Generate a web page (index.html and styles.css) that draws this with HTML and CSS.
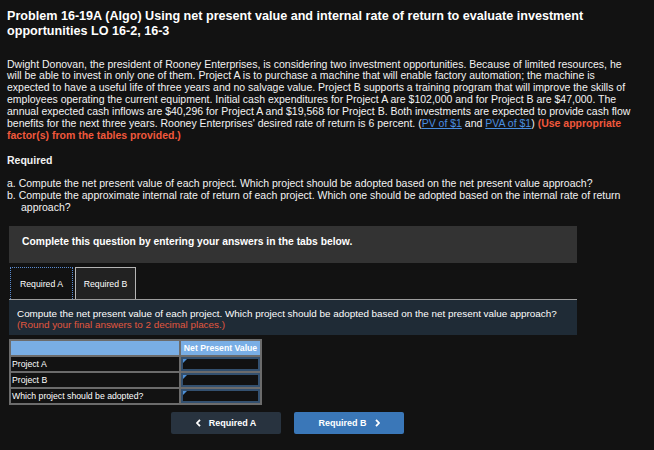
FILE: index.html
```html
<!DOCTYPE html>
<html lang="en">
<head>
<meta charset="utf-8">
<title>Problem 16-19A</title>
<link rel="stylesheet" href="styles.css">
</head>
<body>
<div class="page">
  <h1 class="title">Problem 16-19A (Algo) Using net present value and internal rate of return to evaluate investment<br>opportunities LO 16-2, 16-3</h1>

  <p class="intro">Dwight Donovan, the president of Rooney Enterprises, is considering two investment opportunities. Because of limited resources, he<br>will be able to invest in only one of them. Project A is to purchase a machine that will enable factory automation; the machine is<br>expected to have a useful life of three years and no salvage value. Project B supports a training program that will improve the skills of<br>employees operating the current equipment. Initial cash expenditures for Project A are $102,000 and for Project B are $47,000. The<br>annual expected cash inflows are $40,296 for Project A and $19,568 for Project B. Both investments are expected to provide cash flow<br>benefits for the next three years. Rooney Enterprises' desired rate of return is 6 percent. (<a class="link" href="#">PV of $1</a> and <a class="link" href="#">PVA of $1</a>) <span class="warn">(Use appropriate<br>factor(s) from the tables provided.)</span></p>

  <h2 class="req-head">Required</h2>
  <ul class="req-list">
    <li>a. Compute the net present value of each project. Which project should be adopted based on the net present value approach?</li>
    <li>b. Compute the approximate internal rate of return of each project. Which one should be adopted based on the internal rate of return<br>approach?</li>
  </ul>

  <div class="notice">Complete this question by entering your answers in the tabs below.</div>

  <div class="tabs">
    <button class="tab tab-active">Required A</button>
    <button class="tab tab-idle">Required B</button>
  </div>

  <div class="panel">
    <p class="prompt">Compute the net present value of each project. Which project should be adopted based on the net present value approach?<br><span class="hint">(Round your final answers to 2 decimal places.)</span></p>
  </div>

  <table class="answer">
    <tr class="head-row">
      <th class="label-col"></th>
      <th class="value-col">Net Present Value</th>
    </tr>
    <tr>
      <td class="label">Project A</td>
      <td class="input-cell"><div class="field"></div></td>
    </tr>
    <tr>
      <td class="label">Project B</td>
      <td class="input-cell"><div class="field"></div></td>
    </tr>
    <tr>
      <td class="label">Which project should be adopted?</td>
      <td class="input-cell"><div class="field"></div></td>
    </tr>
  </table>

  <div class="nav">
    <button class="nav-btn nav-prev">
      <svg class="chev" width="5" height="8" viewBox="0 0 5 8"><polyline points="4,0.8 1,4 4,7.2" fill="none" stroke="#fff" stroke-width="1.8"/></svg>
      <span>Required A</span>
    </button>
    <button class="nav-btn nav-next">
      <span>Required B</span>
      <svg class="chev" width="5" height="8" viewBox="0 0 5 8"><polyline points="1,0.8 4,4 1,7.2" fill="none" stroke="#fff" stroke-width="1.8"/></svg>
    </button>
  </div>
</div>
</body>
</html>
```

FILE: styles.css
```css
* { box-sizing: border-box; }

html, body {
  margin: 0;
  padding: 0;
  background: #121212;
}

body {
  font-family: "Liberation Sans", Arial, sans-serif;
  color: #f2f2f2;
}

.page {
  padding: 9px 7px 0 7px;
}

.title {
  margin: 0;
  font-size: 12.6px;
  line-height: 15px;
  font-weight: bold;
  color: #ffffff;
  white-space: nowrap;
}

.intro {
  margin: 19.6px 0 0;
  font-size: 10.5px;
  line-height: 11.85px;
  white-space: nowrap;
}

.link {
  color: #4a8fe0;
  text-decoration: underline;
}

.warn {
  color: #f0583c;
  font-weight: bold;
}

.req-head {
  margin: 13.6px 0 0;
  font-size: 10.5px;
  line-height: 11.85px;
  font-weight: bold;
}

.req-list {
  list-style: none;
  margin: 11.2px 0 0;
  padding: 0;
  font-size: 10.5px;
  line-height: 11.85px;
}

.req-list li {
  padding-left: 14px;
  text-indent: -14px;
  white-space: nowrap;
}

.notice {
  margin: 12.5px 0 0 2px;
  width: 568px;
  height: 37px;
  padding: 10px 13px 0;
  background: #333333;
  font-size: 10.3px;
  line-height: 12px;
  font-weight: bold;
  color: #ffffff;
}

.tabs {
  display: flex;
  align-items: flex-end;
  gap: 2px;
  margin: 4px 0 0 2px;
  width: 568px;
  padding-left: 1px;
  border-bottom: 1px solid #9c9c9c;
}

.tab {
  height: 32px;
  padding: 0;
  font-family: "Liberation Sans", Arial, sans-serif;
  font-size: 8.7px;
  color: #ffffff;
  display: flex;
  align-items: center;
  justify-content: center;
}

.tab-active {
  width: 63px;
  background: #121212;
  border: 1px dotted #5b8cd0;
  border-bottom: none;
}

.tab-idle {
  width: 61px;
  background: #222222;
  border: 1px solid #b5b5b5;
  border-bottom: none;
}

.panel {
  margin-left: 2px;
  width: 568px;
  height: 35px;
  background: #1f2b36;
  padding: 7.5px 8px 0;
}

.prompt {
  margin: 0;
  font-size: 9.9px;
  line-height: 11.7px;
  color: #ffffff;
  white-space: nowrap;
}

.hint {
  color: #e2573f;
}

.answer {
  margin: 4px 0 0 2px;
  border-collapse: collapse;
  width: 251px;
  table-layout: fixed;
}

.answer th,
.answer td {
  border: 2px solid #6c6c6c;
  padding: 0;
  height: 16px;
}

.label-col {
  width: 170px;
  background: #79aee5;
}

.value-col {
  width: 81px;
  background: #79aee5;
  color: #ffffff;
  font-size: 8.7px;
  font-weight: bold;
  text-align: center;
}

.label {
  font-size: 8.7px;
  color: #ffffff;
  padding-left: 1px !important;
  white-space: nowrap;
}

.input-cell {
  background: #121212;
}

.field {
  position: relative;
  height: 14px;
  border: 2px solid #33506f;
  background: #111111;
}

.field::before {
  content: "";
  position: absolute;
  left: 0;
  top: 0;
  border-top: 4px solid #4d8fd6;
  border-right: 4px solid transparent;
}

.nav {
  display: flex;
  justify-content: center;
  gap: 13px;
  margin: 7px 0 0 2px;
  width: 557px;
}

.nav-btn {
  width: 110px;
  height: 22px;
  border: none;
  border-radius: 2px;
  display: flex;
  align-items: center;
  justify-content: center;
  gap: 8px;
  padding: 0;
  font-family: "Liberation Sans", Arial, sans-serif;
  font-size: 9px;
  font-weight: bold;
  color: #ffffff;
}

.nav-prev {
  background: #28333f;
}

.nav-next {
  background: #3a77b8;
}

.chev {
  display: block;
}
```
